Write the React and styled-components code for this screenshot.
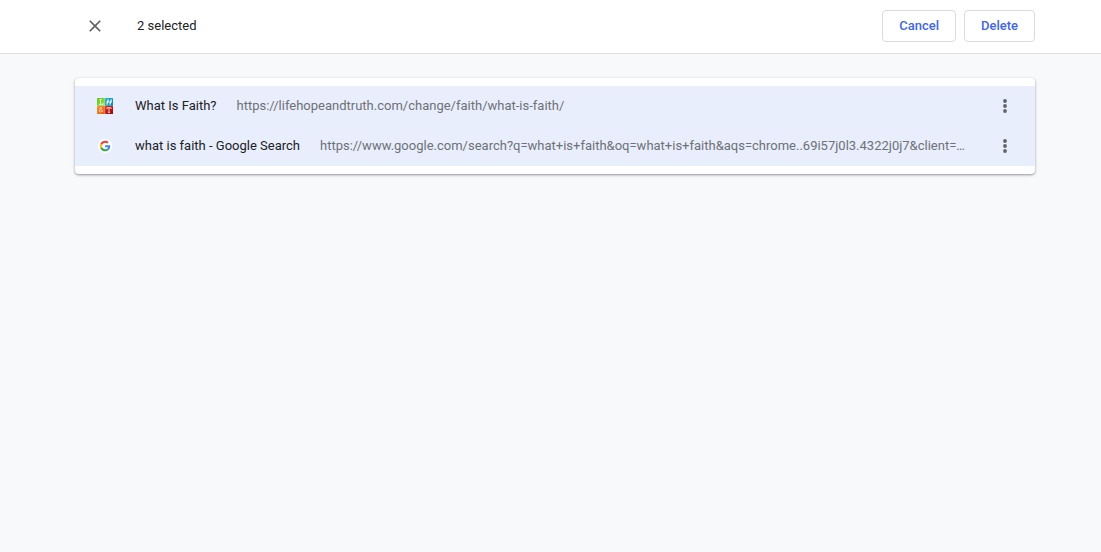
import React from "react";
import styled, { createGlobalStyle } from "styled-components";

const GlobalStyle = createGlobalStyle`
  * { box-sizing: border-box; }
  body {
    margin: 0;
    background: #f8f9fb;
    color: #202124;
    font: 13px/20px Roboto, "Liberation Sans", sans-serif;
  }
`;

const Toolbar = styled.header`
  display: flex;
  align-items: center;
  height: 54px;
  padding: 0 66px 2px 75px;
  background: #fff;
  border-bottom: 1px solid #dcdee2;
`;

const IconButton = styled.button`
  display: flex;
  align-items: center;
  justify-content: center;
  flex: none;
  width: 40px;
  height: 40px;
  padding: 0;
  border: 0;
  border-radius: 50%;
  background: none;
  color: #5f6368;
  cursor: pointer;
`;

const SelectionCount = styled.div`
  flex: 1;
  margin-left: 22px;
`;

const Actions = styled.div`
  display: flex;
  gap: 8px;
`;

const ActionButton = styled.button`
  height: 32px;
  padding: 0 16px;
  border: 1px solid #dadce0;
  border-radius: 4px;
  background: #fff;
  color: #3f66e4;
  font: inherit;
  font-weight: 500;
  cursor: pointer;
`;

const Main = styled.main`
  padding: 24px 66px 24px 75px;
`;

const BookmarkList = styled.ul`
  margin: 0;
  padding: 8px 0;
  list-style: none;
  background: #fff;
  border-radius: 4px;
  box-shadow: 0 1px 2px rgba(60, 64, 67, 0.4), 0 1px 3px 1px rgba(60, 64, 67, 0.12);
`;

const BookmarkRow = styled.li`
  display: flex;
  align-items: center;
  height: 40px;
  padding: 0 10px 0 22px;
  background: ${({ $selected }) => ($selected ? "#e8eefc" : "#fff")};
`;

const Favicon = styled.svg`
  flex: none;
  width: 16px;
  height: 16px;
`;

const Title = styled.div`
  flex: none;
  margin-left: 22px;
`;

const Url = styled.div`
  flex: 1;
  min-width: 0;
  margin: 0 20px;
  overflow: hidden;
  color: #6e7177;
  text-overflow: ellipsis;
  white-space: nowrap;
`;

const CloseIcon = () => (
  <svg width="20" height="20" viewBox="0 0 24 24" fill="currentColor" aria-hidden="true">
    <path d="M19 6.41L17.59 5 12 10.59 6.41 5 5 6.41 10.59 12 5 17.59 6.41 19 12 13.41 17.59 19 19 17.59 13.41 12z" />
  </svg>
);

const MoreIcon = () => (
  <svg width="20" height="20" viewBox="0 0 20 20" fill="currentColor" aria-hidden="true">
    <circle cx="10" cy="5" r="1.9" />
    <circle cx="10" cy="10" r="1.9" />
    <circle cx="10" cy="15" r="1.9" />
  </svg>
);

const LifeHopeTruthIcon = () => (
  <Favicon viewBox="0 0 16 16" aria-hidden="true">
    <defs>
      <linearGradient id="lime" x2="1" y2="1"><stop stopColor="#59c51d" /><stop offset="1" stopColor="#a4e04c" /></linearGradient>
      <linearGradient id="sky" x2="1" y2="1"><stop stopColor="#28b5d2" /><stop offset="1" stopColor="#087eac" /></linearGradient>
      <linearGradient id="amber" x2="1" y2="1"><stop stopColor="#f6942c" /><stop offset="1" stopColor="#e45713" /></linearGradient>
      <linearGradient id="ruby" x2="1" y2="1"><stop stopColor="#d52c24" /><stop offset="1" stopColor="#9e0808" /></linearGradient>
    </defs>
    <rect x="1" y="1" width="14" height="14" fill="#dfe6c8" />
    <rect width="7.8" height="7.8" rx=".5" fill="url(#lime)" />
    <rect x="8.1" width="7.9" height="7.8" rx=".5" fill="url(#sky)" />
    <rect y="8.1" width="7.8" height="7.9" rx=".5" fill="url(#amber)" />
    <rect x="8.1" y="8.1" width="7.9" height="7.9" rx=".5" fill="url(#ruby)" />
    <g fill="none" stroke="#fff">
      <path d="M2.2 1.5h2.6M3.5 1.5v4.8M2.2 6.4h4v-1.3" strokeOpacity=".7" />
      <path d="M11.3 1.3L9.8 6.6M14.4 1.3L12.9 6.6M9.4 4h5.6" strokeWidth="1.2" strokeOpacity=".95" />
      <path d="M6 13.8L2.9 10.6q-.3-1.2.9-1.2t.9 1.1L2.6 12q-1 1.8.9 2 1.4 0 2.4-2" strokeWidth=".9" strokeOpacity=".6" />
      <path d="M9.9 11V9.7h4.2V11M12 9.7v4.8M10.9 14.4h2.2" strokeOpacity=".75" />
    </g>
  </Favicon>
);

const GoogleIcon = () => (
  <Favicon viewBox="0 0 16 16" aria-hidden="true">
    <circle cx="8" cy="8" r="7.2" fill="#fff" />
    <g transform="translate(2.8 2.7) scale(.222)">
      <path fill="#ea4335" d="M24 9.5c3.54 0 6.71 1.22 9.21 3.6l6.85-6.85C35.9 2.38 30.47 0 24 0 14.62 0 6.51 5.38 2.56 13.22l7.98 6.19C12.43 13.72 17.74 9.5 24 9.5z" />
      <path fill="#4285f4" d="M46.98 24.55c0-1.57-.15-3.09-.38-4.55H24v9.02h12.94c-.58 2.96-2.26 5.48-4.78 7.18l7.73 6c4.51-4.18 7.09-10.36 7.09-17.65z" />
      <path fill="#fbbc05" d="M10.53 28.59A14.5 14.5 0 0 1 9.77 24c0-1.6.27-3.14.76-4.59l-7.98-6.19A23.9 23.9 0 0 0 0 24c0 3.88.92 7.54 2.56 10.78l7.97-6.19z" />
      <path fill="#34a853" d="M24 48c6.48 0 11.93-2.13 15.89-5.81l-7.73-6c-2.15 1.45-4.92 2.3-8.16 2.3-6.26 0-11.57-4.22-13.47-9.91l-7.98 6.19C6.51 42.62 14.62 48 24 48z" />
    </g>
  </Favicon>
);

const bookmarks = [
  {
    title: "What Is Faith?",
    url: "https://lifehopeandtruth.com/change/faith/what-is-faith/",
    Icon: LifeHopeTruthIcon,
  },
  {
    title: "what is faith - Google Search",
    url: "https://www.google.com/search?q=what+is+faith&oq=what+is+faith&aqs=chrome..69i57j0l3.4322j0j7&client=ms-android&sourceid=chrome-mobile&ie=UTF-8",
    Icon: GoogleIcon,
  },
];

export default function App() {
  return (
    <>
      <GlobalStyle />
      <Toolbar>
        <IconButton type="button" aria-label="Clear selection">
          <CloseIcon />
        </IconButton>
        <SelectionCount>2 selected</SelectionCount>
        <Actions>
          <ActionButton type="button">Cancel</ActionButton>
          <ActionButton type="button">Delete</ActionButton>
        </Actions>
      </Toolbar>
      <Main>
        <BookmarkList>
          {bookmarks.map(({ title, url, Icon }) => (
            <BookmarkRow key={url} $selected>
              <Icon />
              <Title>{title}</Title>
              <Url>{url}</Url>
              <IconButton type="button" aria-label={`More actions for ${title}`}>
                <MoreIcon />
              </IconButton>
            </BookmarkRow>
          ))}
        </BookmarkList>
      </Main>
    </>
  );
}
